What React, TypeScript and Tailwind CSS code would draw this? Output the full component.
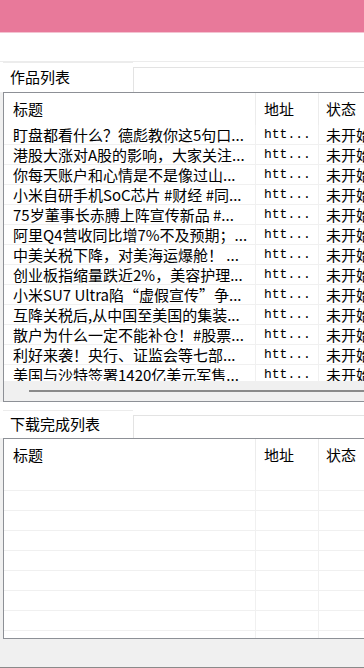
import React from 'react';

const rows = [
  '盯盘都看什么？德彪教你这5句口...',
  '港股大涨对A股的影响，大家关注...',
  '你每天账户和心情是不是像过山...',
  '小米自研手机SoC芯片 #财经 #同...',
  '75岁董事长赤膊上阵宣传新品 #...',
  '阿里Q4营收同比增7%不及预期；...',
  '中美关税下降，对美海运爆舱！ ...',
  '创业板指缩量跌近2%，美容护理...',
  '小米SU7 Ultra陷“虚假宣传”争...',
  '互降关税后,从中国至美国的集装...',
  '散户为什么一定不能补仓！#股票...',
  '利好来袭！央行、证监会等七部...',
  '美国与沙特签署1420亿美元军售...',
];

const TabRow: React.FC<{ label: string; h: string }> = ({ label, h }) => (
  <div className={`flex ${h} bg-white`}>
    <div className="ml-[3px] w-[130px] flex items-center pl-[7px] text-[15px] text-black border-t border-[#ececec]">
      {label}
    </div>
    <div className="flex-1 mt-[5px] border-t border-l border-[#e3e3e3] bg-white" />
  </div>
);

const Header: React.FC = () => (
  <div className="flex h-[32px] bg-white text-[15px] text-black">
    <div className="w-[252px] shrink-0 flex items-center pl-[9px] border-r border-[#ececec]">标题</div>
    <div className="w-[63px] shrink-0 flex items-center pl-[8px] border-r border-[#ececec]">地址</div>
    <div className="flex-1 flex items-center pl-[7px] whitespace-nowrap overflow-hidden">状态</div>
  </div>
);

const Row: React.FC<{ title?: string }> = ({ title }) => (
  <div className="flex h-[20px] shrink-0 border-b border-[#f0f0f0] text-[15px] leading-[19px] text-black">
    <div className="w-[252px] shrink-0 pl-[9px] whitespace-nowrap overflow-hidden border-r border-[#f0f0f0]">
      {title}
    </div>
    <div className="w-[63px] shrink-0 pl-[8px] whitespace-nowrap overflow-hidden border-r border-[#f0f0f0] font-['Liberation_Mono',monospace] text-[13px]">
      {title ? 'htt...' : ''}
    </div>
    <div className="flex-1 pl-[7px] whitespace-nowrap overflow-hidden">{title ? '未开始' : ''}</div>
  </div>
);

export default function App() {
  return (
    <div className="w-[364px] h-[668px] overflow-hidden bg-[#f0f0f0] flex flex-col font-['Noto_Sans_CJK_SC','Noto_Sans',sans-serif]">
      <div className="h-[32px] shrink-0 bg-[#e8799a]" />
      <div className="h-[30px] shrink-0 bg-white border-t border-[#f4c3d1] border-b border-b-[#ececec]" />

      <TabRow label="作品列表" h="h-[30px] shrink-0" />
      <div className="ml-[3px] shrink-0 border-l border-t border-b border-[#8d9096] bg-white">
        <Header />
        <div className="h-[256px] overflow-hidden flex flex-col">
          {rows.map((r, i) => (
            <Row key={i} title={r} />
          ))}
        </div>
        <div className="h-[20px] bg-[#f0f0f0] flex items-center pl-[25px]">
          <div className="flex-1 h-[2px] bg-[#8a8a8a]" />
        </div>
      </div>

      <div className="h-[8px] shrink-0 bg-white" />
      <TabRow label="下载完成列表" h="h-[28px] shrink-0" />
      <div className="ml-[3px] shrink-0 border-l border-t border-b border-[#8d9096] bg-white">
        <Header />
        <div className="h-[167px] overflow-hidden flex flex-col">
          {Array.from({ length: 9 }).map((_, i) => (
            <Row key={i} />
          ))}
        </div>
      </div>

      <div className="flex-1 flex flex-col justify-end">
        <div className="h-[1px] bg-[#8a8a8a]" />
      </div>
    </div>
  );
}
